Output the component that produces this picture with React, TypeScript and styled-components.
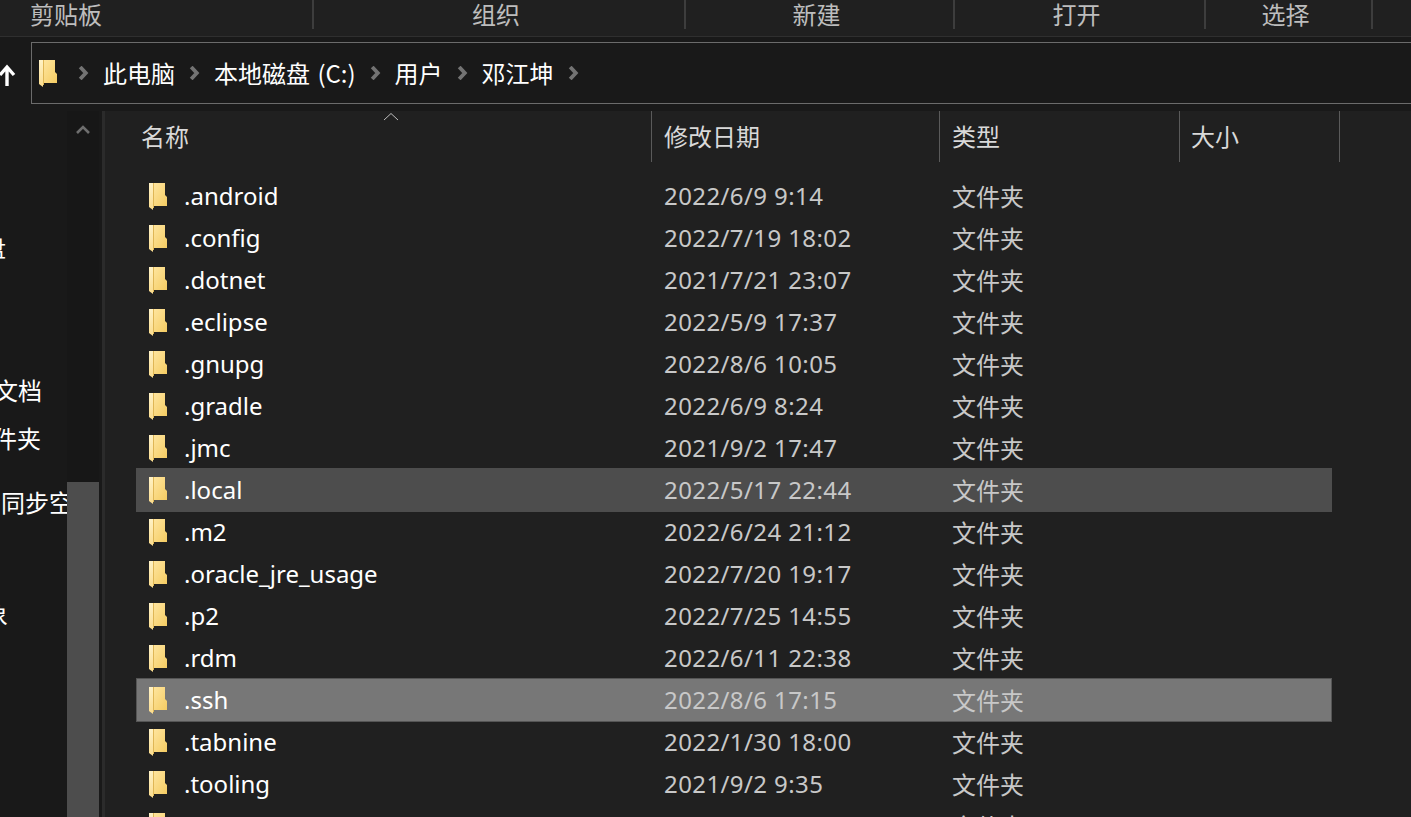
import React from "react";
import styled, { createGlobalStyle } from "styled-components";

const Global = createGlobalStyle`
  html, body { margin: 0; padding: 0; width: 100%; height: 100%; overflow: hidden; background: #191919; }
  #root { height: 100%; }
`;

const FONT = `"Noto Sans", "Open Sans", "Noto Sans CJK SC", sans-serif`;
const CJK = `"Noto Sans CJK SC", "Noto Sans", sans-serif`;

const Page = styled.div`
  width: 1411px;
  height: 817px;
  overflow: hidden;
  display: flex;
  flex-direction: column;
  background: #191919;
  font-family: ${FONT};
  color: #fff;
`;

const Ribbon = styled.div`
  height: 36px;
  flex: none;
  display: flex;
  background: #202020;
  border-bottom: 1px solid #2f2f2f;
  box-sizing: content-box;
`;

const RibbonGroup = styled.div<{ $w: number; $first?: boolean }>`
  width: ${(p) => p.$w}px;
  flex: none;
  height: 29px;
  display: flex;
  align-items: center;
  justify-content: ${(p) => (p.$first ? "flex-start" : "center")};
  padding: ${(p) => (p.$first ? "0 0 2px 30px" : "0 6px 2px 0")};
  border-right: 2px solid #3d3d3d;
  box-sizing: border-box;
  font-family: ${CJK};
  font-size: 24px;
  line-height: 27px;
  color: #bdbdbd;
`;

const AddressRow = styled.div`
  height: 74px;
  flex: none;
  padding: 5px 0 7px 31px;
  box-sizing: border-box;
  position: relative;
`;

const UpArrow = styled.svg`
  position: absolute;
  left: -3px;
  top: 27px;
`;

const AddressBox = styled.div`
  width: 1400px;
  height: 62px;
  box-sizing: border-box;
  border: 1px solid #6b6b6b;
  display: flex;
  align-items: center;
  padding-left: 7px;
  background: #191919;
`;

const Crumb = styled.span`
  font-family: ${CJK};
  font-size: 24px;
  line-height: 34px;
  word-spacing: 2px;
  color: #fff;
  white-space: nowrap;
`;

const Chevron = styled.svg<{ $l: number; $r: number }>`
  flex: none;
  margin-left: ${(p) => p.$l}px;
  margin-right: ${(p) => p.$r}px;
`;

const Main = styled.div`
  flex: 1;
  min-height: 0;
  display: flex;
`;

const Nav = styled.div`
  width: 67px;
  flex: none;
  overflow: hidden;
  background: #191919;
  display: flex;
  flex-direction: column;
  padding-top: 118px;
  box-sizing: border-box;
`;

const NavText = styled.div<{ $top: number; $x: number }>`
  margin-top: ${(p) => p.$top}px;
  margin-left: ${(p) => p.$x}px;
  height: 36px;
  line-height: 36px;
  font-family: ${CJK};
  font-size: 24px;
  color: #fff;
  white-space: nowrap;
`;

const ScrollTrack = styled.div`
  width: 32px;
  flex: none;
  background: #171717;
  display: flex;
  flex-direction: column;
  align-items: center;
`;

const ScrollUp = styled.svg`
  margin-top: 14px;
  margin-bottom: 347px;
`;

const ScrollThumb = styled.div`
  width: 100%;
  flex: 1;
  background: #4d4d4d;
`;

const Gutter = styled.div`
  width: 3px;
  flex: none;
  background: #191919;
`;

const Divider = styled.div`
  width: 3px;
  flex: none;
  background: #2b2b2b;
`;

const Content = styled.div`
  flex: 1;
  min-width: 0;
  background: #202020;
  position: relative;
  overflow: hidden;
`;

const SortCaret = styled.svg`
  position: absolute;
  left: 278px;
  top: 1px;
`;

const HeaderRow = styled.div`
  height: 51px;
  display: flex;
`;

const HeaderCell = styled.div<{ $w: number; $pad: number }>`
  width: ${(p) => p.$w}px;
  flex: none;
  box-sizing: border-box;
  border-right: 1px solid #5a5a5a;
  padding-left: ${(p) => p.$pad}px;
  font-family: ${CJK};
  font-size: 24px;
  line-height: 50px;
  height: 51px;
  color: #d9d9d9;
`;

const Rows = styled.div`
  margin-left: 31px;
  width: 1196px;
  padding-top: 13px;
  isolation: isolate;
`;

const Row = styled.div<{ $state?: "hover" | "selected" }>`
  position: relative;
  height: 42px;
  display: flex;
  align-items: center;
  ${(p) =>
    p.$state
      ? `&::before {
    content: "";
    position: absolute;
    inset: -1px 0;
    z-index: -1;
    box-sizing: border-box;
    background: ${p.$state === "selected" ? "#777777" : "#4d4d4d"};
    border: ${p.$state === "selected" ? "1px solid #555555" : "none"};
  }`
      : ""}
`;

const FolderCell = styled.div`
  width: 48px;
  padding-left: 13px;
  box-sizing: border-box;
  flex: none;
  display: flex;
`;

const NameCell = styled.div`
  width: 480px;
  flex: none;
  font-size: 24px;
  line-height: 34px;
  color: #fff;
  white-space: nowrap;
`;

const DateCell = styled.div`
  width: 288px;
  flex: none;
  font-size: 24px;
  line-height: 34px;
  letter-spacing: 0.4px;
  color: #c8c8c8;
  white-space: nowrap;
`;

const TypeCell = styled.div`
  font-family: ${CJK};
  font-size: 24px;
  line-height: 34px;
  color: #c8c8c8;
  white-space: nowrap;
`;

function Folder() {
  return (
    <svg width={18} height={27} viewBox="0 0 18 27" style={{ flex: "none" }}>
      <defs>
        <linearGradient id="fbk" x1="0" y1="0" x2="1" y2="1">
          <stop offset="0" stopColor="#ffe6a0" />
          <stop offset="1" stopColor="#f4cb62" />
        </linearGradient>
        <linearGradient id="fside" x1="0" y1="0" x2="0" y2="1">
          <stop offset="0" stopColor="#fff2c6" />
          <stop offset="1" stopColor="#fbdc8c" />
        </linearGradient>
      </defs>
      <path d="M4 0h12v12l2 2v9H4z" fill="url(#fbk)" />
      <path d="M0 0h4v27l-4-3z" fill="url(#fside)" />
      <path d="M4 0h1v25H4z" fill="#dfb655" />
    </svg>
  );
}

function Chev({ l, r }: { l: number; r: number }) {
  return (
    <Chevron $l={l} $r={r} width="11" height="14" viewBox="0 0 11 14">
      <path d="M2.2 1l5.6 6-5.6 6" fill="none" stroke="#737373" strokeWidth="3.8" />
    </Chevron>
  );
}

const files: [string, string, ("hover" | "selected")?][] = [
  [".android", "2022/6/9 9:14"],
  [".config", "2022/7/19 18:02"],
  [".dotnet", "2021/7/21 23:07"],
  [".eclipse", "2022/5/9 17:37"],
  [".gnupg", "2022/8/6 10:05"],
  [".gradle", "2022/6/9 8:24"],
  [".jmc", "2021/9/2 17:47"],
  [".local", "2022/5/17 22:44", "hover"],
  [".m2", "2022/6/24 21:12"],
  [".oracle_jre_usage", "2022/7/20 19:17"],
  [".p2", "2022/7/25 14:55"],
  [".rdm", "2022/6/11 22:38"],
  [".ssh", "2022/8/6 17:15", "selected"],
  [".tabnine", "2022/1/30 18:00"],
  [".tooling", "2021/9/2 9:35"],
  [".vscode", "2022/8/1 14:40"],
];

const groups: [string, number][] = [
  ["剪贴板", 314],
  ["组织", 372],
  ["新建", 269],
  ["打开", 251],
  ["选择", 167],
];

export default function App() {
  return (
    <Page>
      <Global />
      <Ribbon>
        {groups.map(([t, w], i) => (
          <RibbonGroup key={t} $w={w} $first={i === 0}>
            {t}
          </RibbonGroup>
        ))}
      </Ribbon>
      <AddressRow>
        <UpArrow width="20" height="24" viewBox="0 0 20 24">
          <path d="M10 3v19M3 11l7-8 7 8" fill="none" stroke="#fff" strokeWidth="3.4" />
        </UpArrow>
        <AddressBox>
          <Folder />
          <Chev l={21} r={14} />
          <Crumb>此电脑</Crumb>
          <Chev l={14} r={14} />
          <Crumb>本地磁盘 (C:)</Crumb>
          <Chev l={14} r={14} />
          <Crumb>用户</Crumb>
          <Chev l={14} r={14} />
          <Crumb>邓江坤</Crumb>
          <Chev l={14} r={0} />
        </AddressBox>
      </AddressRow>
      <Main>
        <Nav>
          <NavText $top={0} $x={-18}>盘</NavText>
          <NavText $top={107} $x={-6}>文档</NavText>
          <NavText $top={12} $x={-7}>件夹</NavText>
          <NavText $top={28} $x={-23}>步同步空间</NavText>
          <NavText $top={76} $x={-16}>象</NavText>
        </Nav>
        <ScrollTrack>
          <ScrollUp width="14" height="10" viewBox="0 0 14 10">
            <path d="M1 8l6-6 6 6" fill="none" stroke="#6e6e6e" strokeWidth="2.6" />
          </ScrollUp>
          <ScrollThumb />
        </ScrollTrack>
        <Gutter />
        <Divider />
        <Content>
          <SortCaret width="16" height="9" viewBox="0 0 16 9">
            <path d="M1 8l7-6.5 7 6.5" fill="none" stroke="#bdbdbd" strokeWidth="1" />
          </SortCaret>
          <HeaderRow>
            <HeaderCell $w={547} $pad={36}>名称</HeaderCell>
            <HeaderCell $w={288} $pad={12}>修改日期</HeaderCell>
            <HeaderCell $w={240} $pad={12}>类型</HeaderCell>
            <HeaderCell $w={160} $pad={11}>大小</HeaderCell>
          </HeaderRow>
          <Rows>
            {files.map(([name, date, state]) => (
              <Row key={name} $state={state}>
                <FolderCell><Folder /></FolderCell>
                <NameCell>{name}</NameCell>
                <DateCell>{date}</DateCell>
                <TypeCell>文件夹</TypeCell>
              </Row>
            ))}
          </Rows>
        </Content>
      </Main>
    </Page>
  );
}
